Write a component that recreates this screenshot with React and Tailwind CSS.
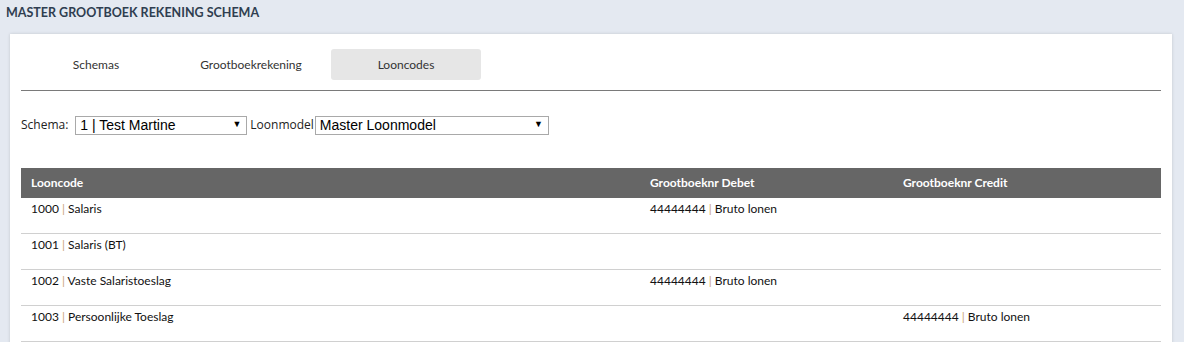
export default function App() {
  const rows = [
    { code: "1000", name: "Salaris", debet: ["44444444", "Bruto lonen"], credit: null },
    { code: "1001", name: "Salaris (BT)", debet: null, credit: null },
    { code: "1002", name: "Vaste Salaristoeslag", debet: ["44444444", "Bruto lonen"], credit: null },
    { code: "1003", name: "Persoonlijke Toeslag", debet: null, credit: ["44444444", "Bruto lonen"] },
  ];
  const Pair = ({ v }) =>
    v ? (
      <span>
        {v[0]} <span className="text-[#c9a27a]">|</span> {v[1]}
      </span>
    ) : null;
  return (
    <div
      className="w-[1184px] h-[342px] overflow-hidden bg-[#e4e9f1]"
      style={{ fontFamily: "Lato, 'Open Sans', sans-serif" }}
    >
      <div className="pl-[6px] pt-[4px] h-[34px] text-[12.5px] font-bold text-[#2f3e50]">
        MASTER GROOTBOEK REKENING SCHEMA
      </div>
      <div className="ml-[10px] w-[1162px] h-[320px] bg-white shadow-[0_0_3px_rgba(0,0,0,0.15)] px-[11px] pt-[15px]">
        <div className="flex gap-[5px] text-[12px] text-[#333]">
          <div className="w-[150px] h-[31px] flex items-center justify-center rounded-[3px]">Schemas</div>
          <div className="w-[150px] h-[31px] flex items-center justify-center rounded-[3px]">Grootboekrekening</div>
          <div className="w-[150px] h-[31px] flex items-center justify-center rounded-[3px] bg-[#e6e6e6]">Looncodes</div>
        </div>
        <div className="mt-[10px] h-[1px] border-t border-[#7a7a7a]" />
        <div
          className="mt-[25px] flex items-center h-[18px] text-[12px] text-[#222]"
          style={{ fontFamily: "'Open Sans', 'Noto Sans', sans-serif" }}
        >
          <span className="mr-[7px]">Schema:</span>
          <div
            className="w-[172px] h-[19px] border border-[#a9a9a9] flex items-center justify-between pl-[4px] pr-[5px] text-[14px] text-black"
            style={{ fontFamily: "'Liberation Sans', Arial, sans-serif" }}
          >
            <span>1 | Test Martine</span>
            <span className="text-[9px]">▼</span>
          </div>
          <span className="ml-[3px] mr-[1px]">Loonmodel</span>
          <div
            className="w-[234px] h-[19px] border border-[#a9a9a9] flex items-center justify-between pl-[4px] pr-[5px] text-[14px] text-black"
            style={{ fontFamily: "'Liberation Sans', Arial, sans-serif" }}
          >
            <span>Master Loonmodel</span>
            <span className="text-[9px]">▼</span>
          </div>
        </div>
        <div className="mt-[34px] w-[1140px] text-[12px]">
          <div className="h-[30px] bg-[#666666] text-white font-bold flex items-center">
            <div className="w-[629px] pl-[10px]">Looncode</div>
            <div className="w-[253px]">Grootboeknr Debet</div>
            <div>Grootboeknr Credit</div>
          </div>
          {rows.map((r) => (
            <div key={r.code} className="h-[36px] border-b border-[#d0d0d0] flex pt-[2px] text-[#111]">
              <div className="w-[629px] pl-[10px]">
                <Pair v={[r.code, r.name]} />
              </div>
              <div className="w-[253px]">
                <Pair v={r.debet} />
              </div>
              <div>
                <Pair v={r.credit} />
              </div>
            </div>
          ))}
        </div>
      </div>
    </div>
  );
}
